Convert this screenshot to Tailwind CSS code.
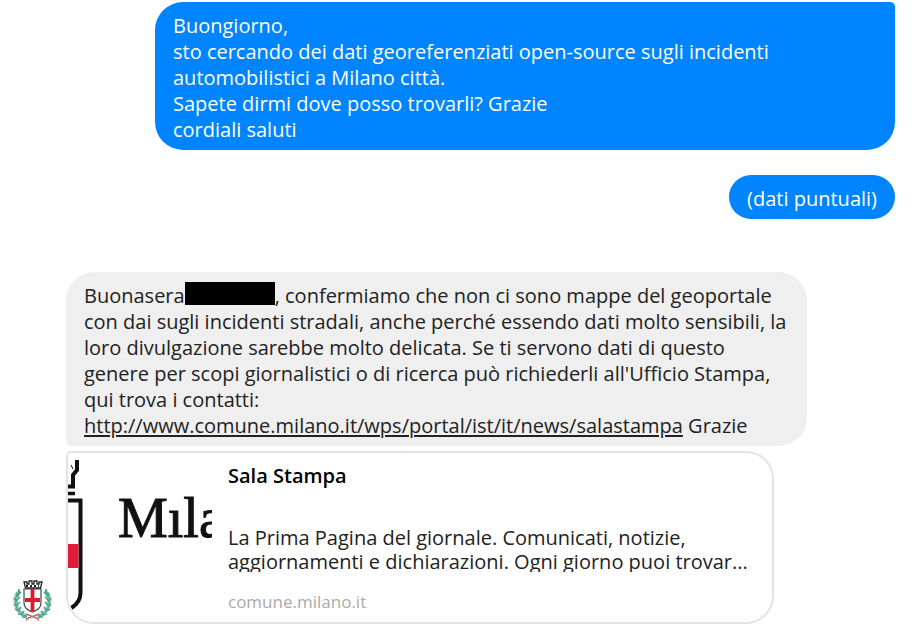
<!DOCTYPE html>
<html lang="it">
<head>
    <meta charset="UTF-8">
    <meta name="viewport" content="width=device-width, initial-scale=1.0">
    <title>Chat - Comune di Milano</title>
    <script src="https://cdn.jsdelivr.net/npm/@tailwindcss/browser@4"></script>
</head>
<body class="bg-white font-['Open_Sans','Noto_Sans',sans-serif] text-[20px] leading-[26px] text-[#222]">
    <main class="flex flex-col pt-0.5 pr-6 pl-3">

        <!-- Sent messages -->
        <section class="flex flex-col items-end gap-[25px] text-white">
            <p class="w-full max-w-[740px] rounded-[28px] rounded-tr-[5px] bg-[#0084ff] px-[18px] pt-[11px] pb-[7px]">
                Buongiorno,<br>
                sto cercando dei dati georeferenziati open-source sugli incidenti<br>
                automobilistici a Milano città.<br>
                Sapete dirmi dove posso trovarli? Grazie<br>
                cordiali saluti
            </p>
            <p class="rounded-full bg-[#0084ff] px-[18px] pt-[11px] pb-[7px]">(dati puntuali)</p>
        </section>

        <!-- Received messages -->
        <section class="mt-[53px] flex items-end gap-[13px]">
            <svg class="mb-[2px] h-[42px] w-[41px] shrink-0" viewBox="0 0 41 42" role="img" aria-label="Comune di Milano">
                <g fill="none" stroke="#4fa58b">
                    <path d="M8 11C1 18 2 31 15 37M33 11C40 18 39 31 26 37" stroke-width="4.500" stroke="#a9d6c8" />
                    <path d="M8 10C1 17 2 32 15 37M33 10C40 17 39 32 26 37" stroke-width="1.300" />
                    <path d="M7 9v4M4 13l2 4M9 12l-4 4M2 18l3 4M8 17l-4 4M2 24l3 3M8 22l-4 4M3 29l4 2M9 27l-3 4M6 34l5 1M12 31l-3 4M10 37l4 0M15 34l-3 3" stroke-width="1.700" />
                    <path d="M34 9v4M37 13l-2 4M32 12l4 4M39 18l-3 4M33 17l4 4M39 24l-3 3M33 22l4 4M38 29l-4 2M32 27l3 4M35 34l-5 1M29 31l3 4M31 37l-4 0M26 34l3 3" stroke-width="1.700" />
                </g>
                <path d="M12 9h17v14q0 6-8.500 9q-8.500-3-8.500-9z" fill="#fff" stroke="#444" stroke-width="1.200" />
                <path d="M20.500 9v22M13 20h15" stroke="#df1834" stroke-width="3.800" />
                <path d="M13.500 8L12 2h3v2h2V1h3v3h2V1h3v3h2V2h3l-1.500 6z" fill="#fff" stroke="#222" stroke-width="1.300" />
                <path d="M14 6h13" stroke="#222" stroke-width="2" stroke-dasharray="2 2" />
                <path d="M14 34l13 5M27 34l-13 5" stroke="#c4706c" stroke-width="1.500" />
                <path d="M17 37l-3 4M24 37l3 4" stroke="#c4706c" />
            </svg>

            <div class="flex min-w-0 flex-1 flex-col gap-[5px]">
                <p class="w-full max-w-[741px] rounded-[28px] rounded-bl-[5px] bg-[#efefef] px-[18px] pt-[11px] pb-[7px]">
                    Buonasera<span class="-mt-2 inline-block h-[23px] w-[90px] bg-black align-middle"></span>, confermiamo che non ci sono mappe del geoportale<br>
                    con dai sugli incidenti stradali, anche perché essendo dati molto sensibili, la<br>
                    loro divulgazione sarebbe molto delicata. Se ti servono dati di questo<br>
                    genere per scopi giornalistici o di ricerca può richiederli all'Ufficio Stampa,<br>
                    qui trova i contatti:<br>
                    <a href="http://www.comune.milano.it/wps/portal/ist/it/news/salastampa" class="text-[#222] underline decoration-2 underline-offset-2">http://www.comune.milano.it/wps/portal/ist/it/news/salastampa</a> Grazie
                </p>

                <!-- Link preview -->
                <article class="flex w-full max-w-[708px] overflow-hidden rounded-[28px] rounded-tl-[5px] border-2 border-[#e4e4e4] bg-white">
                    <svg class="h-[169px] w-[144px] shrink-0" viewBox="0 0 144 169" role="img" aria-label="Milano">
                        <path d="M0 33.500h5V22L9 17V7" fill="none" stroke="#111" stroke-width="4" />
                        <path d="M3 12l2 4" stroke="#111" />
                        <path d="M0 40.500h7" stroke="#111" stroke-width="3.500" />
                        <path d="M0 47.500h12.500V140q0 9-9 15" fill="none" stroke="#111" stroke-width="4" />
                        <path d="M0 91h10.500v24H0z" fill="#df1c3c" />
                        <text x="50" y="84" font-family="Liberation Serif, serif" font-size="56" fill="#111" stroke="#111" stroke-width="1">Mıla</text>
                    </svg>
                    <div class="min-w-0 flex-1 pt-[10px] pr-5 pb-2 pl-4">
                        <h2 class="font-semibold text-black">Sala Stampa</h2>
                        <p class="mt-[37px] h-[46px] overflow-hidden leading-6">
                            La Prima Pagina del giornale. Comunicati, notizie,<br>
                            aggiornamenti e dichiarazioni. Ogni giorno puoi trovar...
                        </p>
                        <a href="http://www.comune.milano.it" class="mt-[18px] block text-[17px] leading-6 text-[#aaa]">comune.milano.it</a>
                    </div>
                </article>
            </div>
        </section>
    </main>
</body>
</html>
